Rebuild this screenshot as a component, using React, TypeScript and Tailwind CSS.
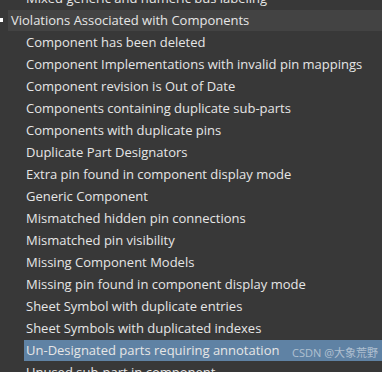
const children = [
  'Component has been deleted',
  'Component Implementations with invalid pin mappings',
  'Component revision is Out of Date',
  'Components containing duplicate sub-parts',
  'Components with duplicate pins',
  'Duplicate Part Designators',
  'Extra pin found in component display mode',
  'Generic Component',
  'Mismatched hidden pin connections',
  'Mismatched pin visibility',
  'Missing Component Models',
  'Missing pin found in component display mode',
  'Sheet Symbol with duplicate entries',
  'Sheet Symbols with duplicated indexes',
  'Un-Designated parts requiring annotation',
  'Unused sub-part in component',
]

export default function App() {
  return (
    <div
      className="relative h-[372px] w-[382px] overflow-hidden bg-[#383838] text-[13px] text-[#e6e6e6] whitespace-nowrap"
      style={{ fontFamily: '"Open Sans", "Noto Sans CJK SC", sans-serif' }}
    >
      <div className="mt-[-13px]">
        <div className="flex h-[22px] items-center pl-[26px] leading-none">
          Mixed generic and numeric bus labeling
        </div>
        <div className="relative flex h-[22px] items-center">
          <span className="absolute left-0 top-[9px] h-[4px] w-[3px] bg-white" />
          <div className="ml-[8px] flex h-[21px] flex-1 items-center bg-[#434343] pl-[3px] leading-none">
            Violations Associated with Components
          </div>
        </div>
        {children.map((c) => (
          <div key={c} className="flex h-[22px] items-center pl-[24px]">
            <div
              className={
                'flex h-[21px] flex-1 items-center pl-[2px] leading-none ' +
                (c.startsWith('Un-') ? 'bg-[#5f82a4]' : '')
              }
            >
              {c}
            </div>
          </div>
        ))}
      </div>
      <div className="absolute right-[4px] top-[345px] text-[11px] text-white/50">CSDN @大象荒野</div>
    </div>
  )
}
